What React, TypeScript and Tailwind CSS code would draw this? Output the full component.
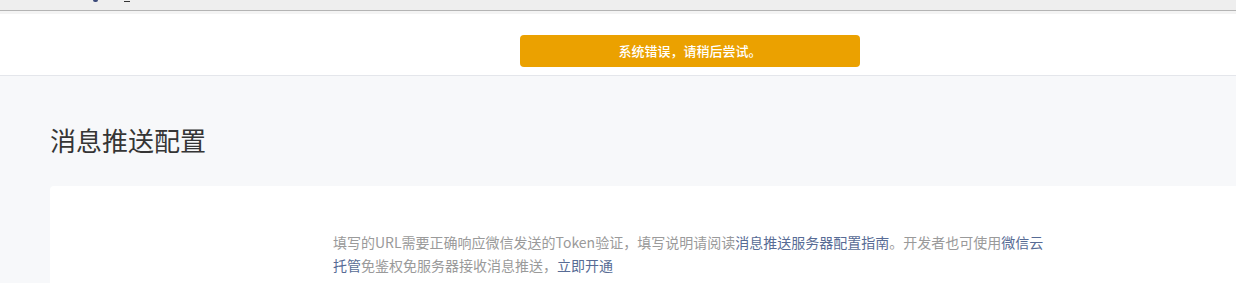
const font = "font-['Microsoft_YaHei','Noto_Sans_CJK_SC',sans-serif]";

function TopStrip() {
  return (
    <div className="relative h-[11px] bg-[#eeeeee] border-b border-[#b4b4b4]">
      {/* descenders of the cut-off line above */}
      <span className="absolute left-[93px] top-0 h-[2px] w-[5px] rounded-b-sm bg-[#3b4a7a]" />
      <span className="absolute left-[124px] top-[1px] h-[1px] w-[6px] bg-[#333]" />
    </div>
  );
}

function Toast({ text }: { text: string }) {
  return (
    <div className="flex h-[32px] w-[340px] items-center justify-center rounded bg-[#eba100] text-[13px] font-medium text-white">
      {text}
    </div>
  );
}

export default function App() {
  return (
    <div className={`flex h-[283px] flex-col overflow-hidden bg-[#f7f8fa] ${font}`}>
      <TopStrip />
      <div className="h-[3px] bg-[#f4f4f4]" />
      <header className="flex h-[62px] shrink-0 justify-center border-b border-[#e4e6eb] bg-white pt-[21px]">
        <div className="ml-[144px]">
          <Toast text="系统错误，请稍后尝试。" />
        </div>
      </header>
      <main className="flex flex-1 flex-col pl-[50px]">
        <h1 className="pt-[46px] text-[26px] leading-[36px] text-[#353535]">消息推送配置</h1>
        <section className="mt-[28px] flex-1 rounded-tl bg-white pl-[283px] pt-[45px]">
          <p className="w-[716px] text-[14px] leading-[23px] text-[#9a9a9a]">
            填写的URL需要正确响应微信发送的Token验证，填写说明请阅读
            <span className="text-[#576b95]">消息推送服务器配置指南</span>
            。开发者也可使用
            <span className="text-[#576b95]">微信云托管</span>
            免鉴权免服务器接收消息推送，
            <span className="text-[#576b95]">立即开通</span>
          </p>
        </section>
      </main>
    </div>
  );
}
